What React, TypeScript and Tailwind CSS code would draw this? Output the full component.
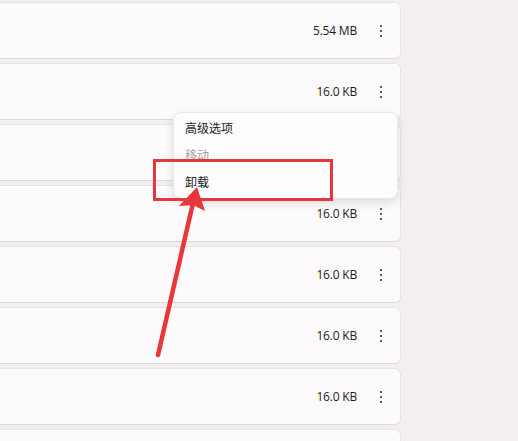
const rows = ["", "5.54 MB", "16.0 KB", "16.0 KB", "16.0 KB", "16.0 KB", "16.0 KB", "16.0 KB", ""];

function Dots() {
  return (
    <svg width="4" height="14" viewBox="0 0 4 14" aria-hidden="true">
      <circle cx="2" cy="2" r="1.1" fill="#333" />
      <circle cx="2" cy="7" r="1.1" fill="#333" />
      <circle cx="2" cy="12" r="1.1" fill="#333" />
    </svg>
  );
}

export default function App() {
  return (
    <div
      className="relative h-[441px] w-[518px] overflow-hidden bg-[#f3efef]"
      style={{ fontFamily: '"Open Sans", "Noto Sans CJK SC", sans-serif' }}
    >
      <div className="-ml-2 -mt-[59px] flex w-[409px] flex-col gap-[4px]">
        {rows.map((size, i) => (
          <div
            key={i}
            className="flex h-[57px] items-center justify-end gap-2 rounded-md border border-[#e6e3e4] border-b-[#dcd9da] bg-[#fcfafb] pr-[3px]"
          >
            {size ? (
              <>
                <span className="text-[12px] tracking-[-0.2px] text-[#1c1c1c]">{size}</span>
                <span className="flex w-8 justify-center">
                  <Dots />
                </span>
              </>
            ) : null}
          </div>
        ))}
      </div>

      <div className="absolute left-[173px] top-[112px] flex w-[225px] flex-col rounded-lg border border-[#ebe8e9] bg-[#fefdfd] py-[2px] shadow-[0_4px_10px_rgba(0,0,0,0.12)]">
        <div className="flex h-[27px] items-center px-[11px] text-[12px] text-[#1a1a1a]">高级选项</div>
        <div className="flex h-[27px] items-center px-[11px] text-[12px] text-[#a3a1a2]">移动</div>
        <div className="flex h-[27px] items-center px-[11px] text-[12px] text-[#1a1a1a]">卸载</div>
      </div>

      <div className="absolute left-[153px] top-[159px] h-[42px] w-[180px] border-[3px] border-[#e8363b]" />

      <svg className="absolute left-0 top-0" width="518" height="441" aria-hidden="true">
        <line x1="158" y1="355" x2="193" y2="203" stroke="#e8363b" strokeWidth="4.5" strokeLinecap="round" />
        <polygon points="197,187 205,211 193,205 179,206" fill="#e8363b" />
      </svg>
    </div>
  );
}
